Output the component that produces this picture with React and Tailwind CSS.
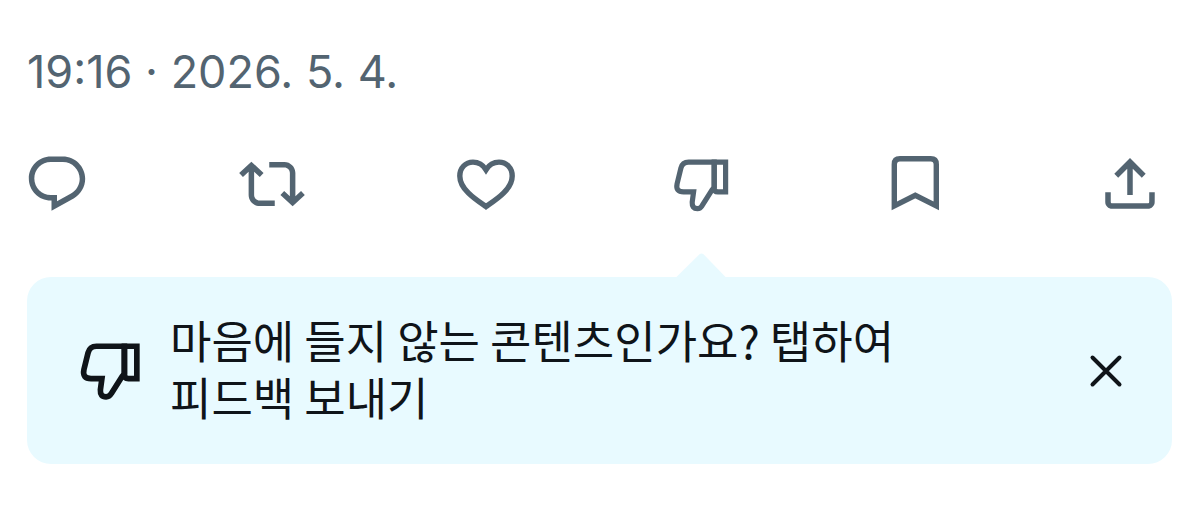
import React, { useState } from 'react'

function ReplyIcon() {
  return (
    <svg viewBox="0 0 24 24" className="size-full" fill="currentColor" aria-hidden="true">
      <path d="M1.751 10c0-4.42 3.584-8 8.005-8h4.366c4.49 0 8.129 3.64 8.129 8.13 0 2.96-1.607 5.68-4.196 7.11l-8.054 4.46v-3.69h-.067c-4.49.1-8.183-3.51-8.183-8.01zm8.005-6c-3.317 0-6.005 2.69-6.005 6 0 3.37 2.77 6.08 6.138 6.01l.351-.01h1.761v2.3l5.087-2.81c1.951-1.08 3.163-3.13 3.163-5.36 0-3.39-2.744-6.13-6.129-6.13H9.756z" />
    </svg>
  )
}

function RepostIcon() {
  return (
    <svg viewBox="0 0 24 24" className="size-full" fill="currentColor" aria-hidden="true">
      <path d="M4.5 3.88l4.432 4.14-1.364 1.46L5.5 7.55V16c0 1.1.896 2 2 2H13v2H7.5c-2.209 0-4-1.79-4-4V7.55L1.432 9.48.068 8.02 4.5 3.88zM16.5 6H11V4h5.5c2.209 0 4 1.79 4 4v8.45l2.068-1.93 1.364 1.46-4.432 4.14-4.432-4.14 1.364-1.46 2.068 1.93V8c0-1.1-.896-2-2-2z" />
    </svg>
  )
}

function HeartIcon() {
  return (
    <svg viewBox="0 0 66 66" className="size-full" fill="none" stroke="currentColor" strokeWidth="5.4" aria-hidden="true">
      <path d="M33 55.6C24 49.4 6.8 38.9 6.8 24.9C6.8 16.9 12.5 11.1 20 11.1C25.5 11.1 30 13.9 33 18.7C36 13.9 40.5 11.1 46 11.1C53.5 11.1 59.2 16.9 59.2 24.9C59.2 38.9 42 49.4 33 55.6z" />
    </svg>
  )
}

function ThumbDownIcon() {
  return (
    <svg viewBox="0 0 66 66" className="size-full" fill="none" stroke="currentColor" strokeWidth="5.2" aria-hidden="true">
      <path d="M46.2 37.2V11.2H20.6Q14.4 11.2 12.9 17.2L9.1 32.7Q7.4 40.9 15.6 40.9H25.6L24.2 51.2Q23.8 57.6 29.4 57.6Q32.4 57.6 34.1 54.7L44.2 38.7Q45.2 37.2 46.2 36.8" />
      <path d="M46.2 11.2H57.6V40.9H49.9Q46.2 40.9 46.2 37.2z" />
    </svg>
  )
}

function BookmarkIcon() {
  return (
    <svg viewBox="0 0 66 66" className="size-full" fill="none" stroke="currentColor" strokeWidth="5.4" aria-hidden="true">
      <path d="M12.3 54.8V13.4Q12.3 7.8 17.9 7.8H48.7Q54.3 7.8 54.3 13.4V54.8L33.3 44.3z" />
    </svg>
  )
}

function ShareIcon() {
  return (
    <svg viewBox="0 0 24 24" className="size-full" fill="currentColor" aria-hidden="true">
      <path d="M12 2.59l5.7 5.7-1.41 1.42L13 6.41V16h-2V6.41l-3.3 3.3-1.41-1.42L12 2.59zM21 15l-.02 3.51c0 1.38-1.12 2.49-2.5 2.49H5.5C4.11 21 3 19.88 3 18.5V15h2v3.5c0 .28.22.5.5.5h12.98c.28 0 .5-.22.5-.5L19 15h2z" />
    </svg>
  )
}

const actions = [
  { id: 'reply', label: '답글', Icon: ReplyIcon },
  { id: 'repost', label: '재게시', Icon: RepostIcon },
  { id: 'like', label: '마음에 들어요', Icon: HeartIcon },
  { id: 'dislike', label: '마음에 들지 않아요', Icon: ThumbDownIcon },
  { id: 'bookmark', label: '북마크', Icon: BookmarkIcon },
  { id: 'share', label: '공유하기', Icon: ShareIcon },
]

export default function App() {
  const [showTip, setShowTip] = useState(true)

  return (
    <main className="min-h-screen bg-white pt-11 pb-12 font-['Inter','Noto_Sans_CJK_KR',sans-serif]">
      <time dateTime="2026-05-04T19:16" className="block px-[27px] text-[45px] leading-14 text-[#536471]">
        19:16 · 2026. 5. 4.
      </time>

      <div className="mt-[51px] flex justify-between pr-9 pl-6 text-[#536471]">
        {actions.map(({ id, label, Icon }) => (
          <div key={id} className="relative">
            <button type="button" aria-label={label} className="block size-[66px]">
              <Icon />
            </button>
            {id === 'dislike' && showTip && (
              <svg
                viewBox="0 0 50 26"
                className="absolute top-[102px] left-2 h-[26px] w-[50px] text-[#e8faff]"
                fill="currentColor"
                aria-hidden="true"
              >
                <path d="M0 26V24.5L23.5 1.2Q25.5 -.4 27.5 1.2L50 24.5V26z" />
              </svg>
            )}
          </div>
        ))}
      </div>

      {showTip && (
        <div className="mx-[27px] mt-[60px] flex items-center rounded-3xl bg-[#e8faff] pt-[34px] pr-11 pb-[35px] pl-[47px] text-[#0f1419]">
          <span className="size-[72px] shrink-0">
            <ThumbDownIcon />
          </span>
          <p className="ml-6 max-w-[760px] pb-1 font-['Noto_Sans_CJK_KR',sans-serif] text-[45px] leading-[57px] break-keep">
            마음에 들지 않는 콘텐츠인가요? 탭하여 피드백 보내기
          </p>
          <button type="button" aria-label="닫기" className="ml-auto size-11 shrink-0" onClick={() => setShowTip(false)}>
            <svg viewBox="0 0 44 44" className="size-full" fill="none" stroke="currentColor" strokeWidth="4" strokeLinecap="round" aria-hidden="true">
              <path d="M8.5 9.5l27 27M35.5 9.5l-27 27" />
            </svg>
          </button>
        </div>
      )}
    </main>
  )
}
